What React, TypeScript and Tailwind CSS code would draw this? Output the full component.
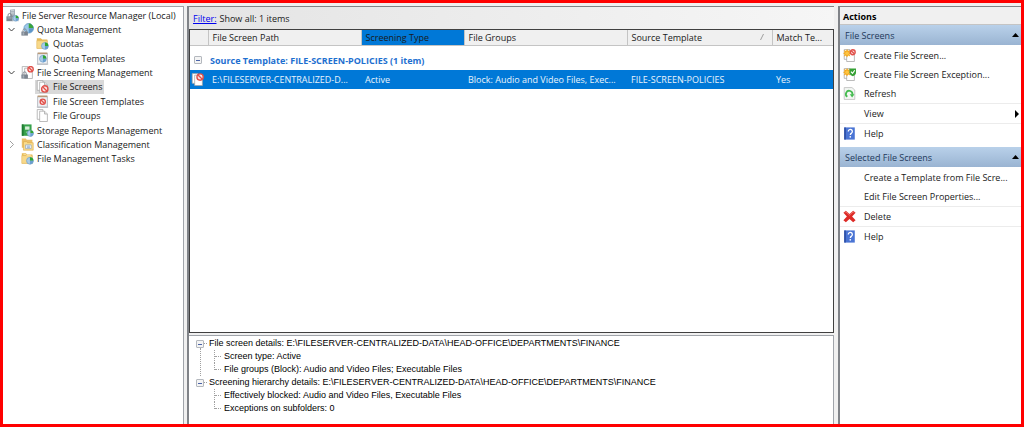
import type { ReactNode } from 'react';

type IconName =
  | 'server'
  | 'quota'
  | 'folderPie'
  | 'templatePie'
  | 'screenMgmt'
  | 'screenRow'
  | 'screens'
  | 'templateBlock'
  | 'pages'
  | 'reports'
  | 'classification'
  | 'tasks'
  | 'newScreen'
  | 'newException'
  | 'refresh'
  | 'help'
  | 'delete';

function Pie({ x, y, r }: { x: number; y: number; r: number }) {
  return (
    <g>
      <circle cx={x} cy={y} r={r} fill="#a9cbe8" stroke="#6d9cc4" strokeWidth="0.8" />
      <path d={`M${x} ${y} L${x} ${y - r} A${r} ${r} 0 0 1 ${x + r} ${y} Z`} fill="#2fa52f" />
      <path d={`M${x} ${y} L${x + r} ${y} A${r} ${r} 0 0 1 ${x} ${y + r} Z`} fill="#6a9fd0" />
    </g>
  );
}

function Block({ x, y, r }: { x: number; y: number; r: number }) {
  const d = r * 0.65;
  return (
    <g>
      <circle cx={x} cy={y} r={r} fill="#fbe3e1" stroke="#e0504a" strokeWidth="1.7" />
      <path d={`M${x - d} ${y - d} L${x + d} ${y + d}`} stroke="#e0504a" strokeWidth="1.7" />
    </g>
  );
}

function Lock() {
  return (
    <g>
      <path d="M2.5 11V9.2a2 2 0 0 1 4 0V11" fill="none" stroke="#858c96" strokeWidth="1.2" />
      <rect x="0.5" y="10.5" width="8" height="5" fill="#7b848f" />
      <rect x="2" y="11.5" width="2" height="3" fill="#a8b0b9" />
    </g>
  );
}

function Pages() {
  return (
    <g fill="#fff" stroke="#a3a3a3" strokeWidth="0.9">
      <path d="M1.5 .7h7v12h-7z" />
      <path d="M4.5 2.7h6l3.5 3.5v9.2H4.5z" />
      <path d="M10.5 2.7v3.5H14" fill="#e6e6e6" />
    </g>
  );
}

function Folder() {
  return (
    <g>
      <path d="M1 1.500h5l1.500 1.500H14V14H1z" fill="#e6b955" />
      <path d="M1 4.500h13v9.500H1z" fill="#f8d98a" stroke="#dfb458" strokeWidth="0.6" />
    </g>
  );
}

function Template() {
  return (
    <g>
      <path d="M2 2h12v13.3H2z" fill="#eef1f5" stroke="#a2a7ae" strokeWidth="0.9" />
      <path d="M2 .6h12v2H2z" fill="#b99a78" />
      <path d="M1 14h14v1.6H1z" fill="#c3c6ca" />
    </g>
  );
}

function Spark() {
  return (
    <g>
      <path
        d="M5 0l1.3 2.5L9 1.3 8 4l2.6 1.2L8 6.5 9 9.2 6.3 8 5 10.6 3.7 8 1 9.2 2 6.5 0 5.2 2 4 1 1.3 3.7 2.5z"
        fill="#f6a91d"
      />
      <circle cx="5" cy="5.2" r="2.2" fill="#fdc544" />
    </g>
  );
}

const drawings: Record<IconName, ReactNode> = {
  server: (
    <g>
      <path d="M5 0.8l6-.5v11H5z" fill="#9aa5b0" />
      <path d="M6 2h4M6 4h4M6 6h4" stroke="#e1e6eb" strokeWidth="0.9" />
      <path d="M2.5 9V7.500a2 2 0 0 1 4 0V9" fill="none" stroke="#7f8690" strokeWidth="1.2" />
      <path d="M.5 9h8v6h-8z" fill="#7d8791" />
      <path d="M2 11h5" stroke="#b3bbc3" />
      <path d="M8 10l4-3 4 3v5H8z" fill="#c8d2dc" />
      <Pie x={12} y={11.5} r={3.4} />
    </g>
  ),
  quota: (
    <g>
      <circle cx="9.5" cy="6.5" r="5.9" fill="#9cc8ea" stroke="#5f94c0" strokeWidth="0.9" />
      <path d="M9.5 6.500V.7a5.8 5.8 0 0 1 5.8 5.8z" fill="#3aa63a" />
      <path d="M9.500 6.500h5.800a5.800 5.800 0 0 1-5.800 5.800z" fill="#5f96c8" />
      <Lock />
    </g>
  ),
  folderPie: (
    <g>
      <Folder />
      <Pie x={11} y={11} r={4.2} />
    </g>
  ),
  templatePie: (
    <g>
      <Template />
      <Pie x={8.5} y={8.3} r={4.2} />
    </g>
  ),
  screenMgmt: (
    <g>
      <Pages />
      <Block x={11.8} y={4} r={3.3} />
      <Lock />
    </g>
  ),
  screenRow: (
    <g>
      <Pages />
      <Block x={11.2} y={5} r={3.9} />
    </g>
  ),
  screens: (
    <g>
      <Pages />
      <Block x={10.8} y={11} r={3.9} />
    </g>
  ),
  templateBlock: (
    <g>
      <Template />
      <Block x={8.3} y={8.3} r={3.2} />
    </g>
  ),
  pages: <Pages />,
  reports: (
    <g>
      <path d="M1 .5h12v14H1z" fill="#37a14b" />
      <path d="M1 .5h2.200v14H1z" fill="#1f7a32" />
      <path d="M5 3h5.500v4H5z" fill="#d6efd9" />
      <path d="M6 10h2" stroke="#bfe6c5" />
      <Pie x={11.5} y={11.5} r={3.8} />
    </g>
  ),
  classification: (
    <g>
      <path d="M1 .5h5l1 1.500h7V12H1z" fill="#ecc069" />
      <path d="M3 4.500h4l1 1.300h7V15H3z" fill="#f9dc8e" stroke="#d9a640" strokeWidth="0.7" />
      <path d="M5.500 8.500h7v4.500h-7z" fill="#fff" stroke="#8a9db4" strokeWidth="0.8" />
      <path d="M7 10h4M7 11.500h4" stroke="#5b86bd" strokeWidth="0.8" />
    </g>
  ),
  tasks: (
    <g>
      <Folder />
      <path d="M3 3h3l1 1.300h5" stroke="#fbe6a8" fill="none" />
      <Pie x={11} y={10.8} r={4.2} />
    </g>
  ),
  newScreen: (
    <g>
      <Pages />
      <Spark />
      <Block x={12} y={4} r={3} />
    </g>
  ),
  newException: (
    <g>
      <Pages />
      <Spark />
      <path d="M8 .5h8v5q0 3-4 4.500-4-1.500-4-4.500z" fill="#35a035" />
      <path d="M9.800 4.500l1.900 2L14.500 2.800" stroke="#fff" strokeWidth="1.4" fill="none" />
    </g>
  ),
  refresh: (
    <g>
      <path d="M1.500 .7h9.500l3.500 3v11.600h-13z" fill="#f4f7f4" stroke="#b8b8b8" strokeWidth="0.9" />
      <path d="M5.300 12A4 4 0 1 1 11.500 9.500" stroke="#45bb50" strokeWidth="2.2" fill="none" />
      <path d="M8.300 8.800h5.800l-2.900 4z" fill="#45bb50" />
    </g>
  ),
  help: (
    <g>
      <path d="M1.500 .5h13v15h-13z" fill="#4a74d4" />
      <path d="M1.500 .5h2v15h-2z" fill="#2d4fa3" />
      <path
        d="M6.500 5.500a2.500 2.500 0 1 1 4 2c-1 .7-1.500 1.200-1.500 2.300"
        stroke="#fff"
        strokeWidth="1.6"
        fill="none"
      />
      <path d="M8.100 11.200h1.800V13H8.100z" fill="#fff" />
    </g>
  ),
  delete: (
    <g>
      <path
        d="M.5 3.500L3.500 .8 8 4.800 12.500 .8 15.500 3.500 11.200 8l4.300 4.500-3 2.700L8 11.200l-4.500 4-3-2.700L4.800 8z"
        fill="#dd2a26"
      />
      <path d="M2 3.500l1.500-1.300L8 6.300l4.500-4.100L14 3.500" stroke="#f2837b" fill="none" />
    </g>
  ),
};

function Icon({ name }: { name: IconName }) {
  return (
    <svg viewBox="0 0 16 16" className="size-[13px] shrink-0" aria-hidden="true">
      {drawings[name]}
    </svg>
  );
}

type TreeNode = {
  label: string;
  icon: IconName;
  level: 0 | 1 | 2;
  expanded?: boolean;
  selected?: boolean;
};

const tree: TreeNode[] = [
  { label: 'File Server Resource Manager (Local)', icon: 'server', level: 0 },
  { label: 'Quota Management', icon: 'quota', level: 1, expanded: true },
  { label: 'Quotas', icon: 'folderPie', level: 2 },
  { label: 'Quota Templates', icon: 'templatePie', level: 2 },
  { label: 'File Screening Management', icon: 'screenMgmt', level: 1, expanded: true },
  { label: 'File Screens', icon: 'screens', level: 2, selected: true },
  { label: 'File Screen Templates', icon: 'templateBlock', level: 2 },
  { label: 'File Groups', icon: 'pages', level: 2 },
  { label: 'Storage Reports Management', icon: 'reports', level: 1 },
  { label: 'Classification Management', icon: 'classification', level: 1, expanded: false },
  { label: 'File Management Tasks', icon: 'tasks', level: 1 },
];

const indents = { 0: 'pl-[3px]', 1: 'pl-1', 2: 'pl-8' };

const rowStyles = {
  0: 'gap-[3px]',
  1: 'gap-[3px]',
  2: 'gap-1 pl-px pr-[2px]',
};

function TreeRow({ node }: { node: TreeNode }) {
  return (
    <li
      role="treeitem"
      aria-level={node.level + 1}
      aria-expanded={node.expanded}
      aria-selected={node.selected ?? false}
      className={`flex items-center ${indents[node.level]}`}
    >
      {node.level === 1 && (
        <span className="flex w-[14px] shrink-0">
          {node.expanded !== undefined && (
            <button
              type="button"
              aria-label={node.expanded ? `Collapse ${node.label}` : `Expand ${node.label}`}
              className="flex"
            >
              <svg viewBox="0 0 9 9" className="size-[9px]" fill="none" aria-hidden="true">
                {node.expanded ? (
                  <path d="M1.500 3l3 3 3-3" stroke="#404040" />
                ) : (
                  <path d="M3 1l3.500 3.500L3 8" stroke="#a0a0a0" />
                )}
              </svg>
            </button>
          )}
        </span>
      )}
      <button
        type="button"
        className={`flex h-[14px] items-center whitespace-nowrap ${rowStyles[node.level]} ${node.selected ? 'bg-[#d9d9d9]' : ''}`}
      >
        <Icon name={node.icon} />
        {node.label}
      </button>
    </li>
  );
}

function ToggleBox({ label }: { label: string }) {
  return (
    <button
      type="button"
      aria-label={label}
      className="flex size-[8px] shrink-0 items-center justify-center rounded-[1px] border border-[#b4b8be] bg-[#f4f4f4]"
    >
      <span className="h-px w-1 bg-[#4a63a8]" />
    </button>
  );
}

type DetailGroup = { title: string; lines: string[] };

const details: DetailGroup[] = [
  {
    title: 'File screen details: E:\\FILESERVER-CENTRALIZED-DATA\\HEAD-OFFICE\\DEPARTMENTS\\FINANCE',
    lines: ['Screen type: Active', 'File groups (Block): Audio and Video Files; Executable Files'],
  },
  {
    title:
      'Screening hierarchy details: E:\\FILESERVER-CENTRALIZED-DATA\\HEAD-OFFICE\\DEPARTMENTS\\FINANCE',
    lines: ['Effectively blocked: Audio and Video Files, Executable Files', 'Exceptions on subfolders: 0'],
  },
];

function DetailBlock({ group, linked }: { group: DetailGroup; linked: boolean }) {
  return (
    <li className="flex">
      <div className="flex w-[8px] shrink-0 flex-col items-center pt-[3px]">
        <ToggleBox label={`Collapse ${group.title}`} />
        {linked && <span className="w-0 flex-1 border-l border-dotted border-[#a0a0a0]" />}
      </div>
      <div>
        <div className="flex h-[13px] items-center gap-[2px]">
          <span className="w-[3px] border-t border-dotted border-[#a0a0a0]" />
          {group.title}
        </div>
        <ul>
          {group.lines.map((line, index) => (
            <li key={line} className="flex h-[13px] items-center pl-[10px]">
              <span
                className={`w-0 border-l border-dotted border-[#a0a0a0] ${index === group.lines.length - 1 ? 'h-[7px] self-start' : 'h-[13px]'}`}
              />
              <span className="mr-[3px] w-[6px] border-t border-dotted border-[#a0a0a0]" />
              {line}
            </li>
          ))}
        </ul>
      </div>
    </li>
  );
}

type Action = { label: string; icon?: IconName; divided?: boolean; submenu?: boolean };

const sections: { title: string; actions: Action[] }[] = [
  {
    title: 'File Screens',
    actions: [
      { label: 'Create File Screen...', icon: 'newScreen' },
      { label: 'Create File Screen Exception...', icon: 'newException' },
      { label: 'Refresh', icon: 'refresh' },
      { label: 'View', divided: true, submenu: true },
      { label: 'Help', icon: 'help', divided: true },
    ],
  },
  {
    title: 'Selected File Screens',
    actions: [
      { label: 'Create a Template from File Scre...' },
      { label: 'Edit File Screen Properties...' },
      { label: 'Delete', icon: 'delete', divided: true },
      { label: 'Help', icon: 'help', divided: true },
    ],
  },
];

function ActionSection({ title, actions }: { title: string; actions: Action[] }) {
  return (
    <section>
      <button
        type="button"
        aria-expanded="true"
        className="flex h-[20px] w-full items-center justify-between bg-linear-to-b from-[#b9d1ea] to-[#9ab4d2] pr-[2px] pl-[5px] text-[#1e395b]"
      >
        {title}
        <svg viewBox="0 0 7 4" className="h-1 w-[7px]" aria-hidden="true">
          <path d="M3.500 0L7 4H0z" fill="#000" />
        </svg>
      </button>
      <ul className="pt-px pb-1">
        {actions.map((action) => (
          <li key={action.label} className={action.divided ? 'border-t border-[#ececec]' : ''}>
            <button
              type="button"
              className="flex h-[19px] w-full items-center gap-2 pr-[2px] pl-[3px] whitespace-nowrap"
            >
              {action.icon ? <Icon name={action.icon} /> : <span className="w-[13px] shrink-0" />}
              {action.label}
              {action.submenu && (
                <svg viewBox="0 0 4 8" className="ml-auto h-2 w-1" aria-hidden="true">
                  <path d="M0 0l4 4-4 4z" fill="#000" />
                </svg>
              )}
            </button>
          </li>
        ))}
      </ul>
    </section>
  );
}

const headCell = 'border-r border-[#c4c4c4] px-1 text-left font-normal whitespace-nowrap';

export default function App() {
  return (
    <div className="flex min-h-screen border-[3px] border-[#ff0000] bg-[#f0f0f0] pt-[3px] font-['Open_Sans','Noto_Sans',sans-serif] text-[9px] leading-[13px] text-[#1a1a1a]">
      <nav
        aria-label="Console tree"
        className="mr-[3px] w-[181px] shrink-0 border-t border-r border-[#a0a4aa] bg-white pt-px"
      >
        <ul role="tree" className="grid h-[158px] auto-rows-fr">
          {tree.map((node) => (
            <TreeRow key={node.label} node={node} />
          ))}
        </ul>
      </nav>

      <main className="flex min-w-0 flex-1 flex-col border-t border-l-2 border-[#808388] bg-[#f0f0f0]">
        <div className="flex h-[22px] items-center gap-[3px] bg-linear-to-r from-[#e4e4e4] to-[#f6f6f6] pl-1">
          <a href="#filter" className="text-[#0000ee] underline">
            Filter:
          </a>
          <span>Show all: 1 items</span>
        </div>

        <div className="min-h-[304px] border border-[#404040] bg-white">
          <table className="w-full table-fixed border-collapse">
            <colgroup>
              <col className="w-[18px]" />
              <col className="w-[153px]" />
              <col className="w-[103px]" />
              <col />
              <col className="w-[145px]" />
              <col className="w-[61px]" />
            </colgroup>
            <thead>
              <tr className="h-[15px] border-b border-[#c4c4c4] bg-[#f0f0f0]">
                <th className={headCell} aria-label="Icon" />
                <th className={headCell}>File Screen Path</th>
                <th className={`${headCell} bg-[#0078d7]`}>Screening Type</th>
                <th className={headCell}>File Groups</th>
                <th className={headCell}>
                  <span className="flex items-center justify-between">
                    Source Template
                    <svg viewBox="0 0 4 6" className="mr-1 h-[6px] w-1" aria-hidden="true">
                      <path d="M.5 6L3.500 0" stroke="#8a8a8a" strokeWidth="0.8" />
                    </svg>
                  </span>
                </th>
                <th className="px-1 text-left font-normal whitespace-nowrap">Match Te...</th>
              </tr>
            </thead>
            <tbody>
              <tr className="h-[25px]">
                <td colSpan={6} className="pt-[5px] pl-1 font-bold text-[#1e6fd0]">
                  <span className="flex items-center gap-2">
                    <ToggleBox label="Collapse group" />
                    Source Template: FILE-SCREEN-POLICIES (1 item)
                  </span>
                </td>
              </tr>
              <tr className="h-[19px] bg-[#0078d7] whitespace-nowrap text-[#e8f3fc]">
                <td className="pl-px">
                  <Icon name="screenRow" />
                </td>
                <td className="px-1">E:\FILESERVER-CENTRALIZED-D...</td>
                <td className="px-1">Active</td>
                <td className="px-1">Block: Audio and Video Files, Exec...</td>
                <td className="px-1">FILE-SCREEN-POLICIES</td>
                <td className="px-1">Yes</td>
              </tr>
            </tbody>
          </table>
        </div>

        <section
          aria-label="Details"
          className="mt-[2px] flex-1 border-t border-r border-[#a0a4aa] bg-white pt-px pl-[7px] font-['Liberation_Sans',Arial,sans-serif] whitespace-nowrap text-black"
        >
          <ul>
            {details.map((group, index) => (
              <DetailBlock key={group.title} group={group} linked={index < details.length - 1} />
            ))}
          </ul>
        </section>
      </main>

      <aside
        aria-label="Actions"
        className="ml-1 w-[183px] shrink-0 border-t border-l-2 border-[#808388] bg-white"
      >
        <h2 className="flex h-[18px] items-center border-b border-[#c4c4c4] bg-[#f0f0f0] pt-[2px] pl-[3px] font-bold text-black">
          Actions
        </h2>
        {sections.map((section) => (
          <ActionSection key={section.title} title={section.title} actions={section.actions} />
        ))}
      </aside>
    </div>
  );
}
